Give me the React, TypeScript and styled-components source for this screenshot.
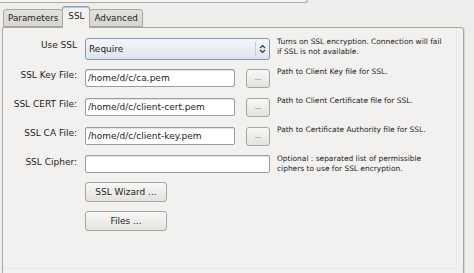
import React from "react";
import styled, { createGlobalStyle } from "styled-components";

const Global = createGlobalStyle`
  html, body { margin: 0; padding: 0; }
  body {
    background: #efeeec;
    overflow: hidden;
    font-family: "DejaVu Sans", "Liberation Sans", sans-serif;
    color: #1c1c1c;
  }
`;

const Window = styled.div`
  width: 474px;
  height: 273px;
  position: relative;
  overflow: hidden;
`;

const TopBox = styled.div`
  width: 307px;
  height: 3px;
  background: #f5f4f3;
  border-right: 1px solid #aeacaa;
  border-bottom: 1px solid #aeacaa;
  border-bottom-right-radius: 3px;
  margin-top: -1px;
`;

const Notebook = styled.div`
  margin-left: 2px;
  width: 462px;
`;

const TabBar = styled.div`
  display: flex;
  align-items: flex-end;
  height: 21px;
  margin-top: 3px;
  padding-left: 1px;
  position: relative;
  z-index: 1;
`;

const Tab = styled.div<{ $active?: boolean }>`
  box-sizing: border-box;
  height: ${(p) => (p.$active ? "22px" : "18px")};
  margin-bottom: ${(p) => (p.$active ? "-1px" : "0")};
  padding: ${(p) => (p.$active ? "3px 5px 0" : "2px 4px 0")};
  font-size: 8.8px;
  line-height: 12px;
  color: #1c1c1c;
  border: 1px solid #a9a7a4;
  border-bottom: ${(p) => (p.$active ? "none" : "1px solid #a9a7a4")};
  border-top-color: ${(p) => (p.$active ? "#8d9fb8" : "#a9a7a4")};
  border-radius: 3px 3px 0 0;
  background: ${(p) =>
    p.$active ? "#f2f1ef" : "linear-gradient(#e3e1de, #d8d6d2)"};
  margin-right: -1px;
  white-space: nowrap;
  box-shadow: ${(p) => (p.$active ? "inset 0 1px 0 #b9c8dc" : "none")};
`;

const Panel = styled.div`
  box-sizing: border-box;
  height: 260px;
  background: #f2f1ef;
  border: 1px solid #a9a7a4;
  border-top-right-radius: 3px;
  box-shadow: 1px 0 0 #d9d7d4;
`;

const Inner = styled.div`
  box-sizing: border-box;
  height: 241px;
  margin-right: 6px;
  border-right: 1px solid #e8e7e5;
  border-bottom: 1px solid #e8e7e5;
  padding-top: 10px;
`;

const Form = styled.div`
  display: grid;
  grid-template-columns: 82px 192px 1fr;
  grid-template-rows: 21px 20px 20px 20px 18px 20px 20px;
  row-gap: 9px;
`;

const Label = styled.div`
  text-align: right;
  padding-right: 8px;
  padding-top: 2px;
  font-size: 9px;
  line-height: 11px;
  white-space: nowrap;
`;

const FieldCell = styled.div`
  grid-column: 2;
  padding-right: 7px;
  display: flex;
  align-items: center;
  justify-content: space-between;
`;

const Desc = styled.div`
  font-size: 7.45px;
  line-height: 10px;
  margin-top: -1px;
  color: #232323;
  white-space: nowrap;
`;

const Select = styled.div`
  box-sizing: border-box;
  width: 185px;
  height: 22px;
  border: 1px solid #8497b3;
  border-radius: 3px;
  background: linear-gradient(#f4f6f9, #dfe4ec);
  display: flex;
  align-items: center;
  font-size: 9px;
  padding-left: 3px;
  position: relative;
`;

const SelectValue = styled.span`
  flex: 1;
`;

const SelectSep = styled.span`
  width: 1px;
  align-self: stretch;
  margin: 3px 0;
  background: #c3c9d2;
`;

const SelectArrow = styled.span`
  width: 13px;
  display: flex;
  justify-content: center;
  align-items: center;
`;

const TextInput = styled.div<{ $wide?: boolean }>`
  box-sizing: border-box;
  width: ${(p) => (p.$wide ? "185px" : "150px")};
  height: 18px;
  background: #ffffff;
  border: 1px solid #9f9d9a;
  border-radius: 2px;
  box-shadow: inset 0 1px 1px #e2e1df;
  font-size: 9px;
  line-height: 16px;
  padding-left: 2px;
  white-space: nowrap;
  overflow: hidden;
`;

const Button = styled.div<{ $w: number }>`
  box-sizing: border-box;
  width: ${(p) => p.$w}px;
  height: ${(p) => (p.$w < 40 ? 19 : 20)}px;
  border: 1px solid #a7a5a2;
  border-radius: 3px;
  background: linear-gradient(#f8f8f7, #e4e2df);
  display: flex;
  align-items: center;
  justify-content: center;
  font-size: ${(p) => (p.$w < 40 ? "7px" : "9px")};
  color: ${(p) => (p.$w < 40 ? "#555" : "#1c1c1c")};
  white-space: nowrap;
`;

const FileRow = ({ label, value, desc }: { label: string; value: string; desc: string }) => (
  <>
    <Label>{label}</Label>
    <FieldCell>
      <TextInput>{value}</TextInput>
      <Button $w={24}>...</Button>
    </FieldCell>
    <Desc>{desc}</Desc>
  </>
);

export default function App() {
  return (
    <Window>
      <Global />
      <TopBox />
      <Notebook>
        <TabBar>
          <Tab>Parameters</Tab>
          <Tab $active>SSL</Tab>
          <Tab>Advanced</Tab>
        </TabBar>
        <Panel>
          <Inner>
            <Form>
              <Label>Use SSL</Label>
              <FieldCell>
                <Select>
                  <SelectValue>Require</SelectValue>
                  <SelectSep />
                  <SelectArrow>
                    <svg width="7" height="10" viewBox="0 0 7 10">
                      <path d="M1 4 L3.5 1.5 L6 4 M1 6 L3.5 8.5 L6 6" fill="none" stroke="#3a3a3a" strokeWidth="1.2" />
                    </svg>
                  </SelectArrow>
                </Select>
              </FieldCell>
              <Desc>
                Turns on SSL encryption. Connection will fail
                <br />
                if SSL is not available.
              </Desc>

              <FileRow label="SSL Key File:" value="/home/d/c/ca.pem" desc="Path to Client Key file for SSL." />
              <FileRow label="SSL CERT File:" value="/home/d/c/client-cert.pem" desc="Path to Client Certificate file for SSL." />
              <FileRow label="SSL CA File:" value="/home/d/c/client-key.pem" desc="Path to Certificate Authority file for SSL." />

              <Label>SSL Cipher:</Label>
              <FieldCell>
                <TextInput $wide />
              </FieldCell>
              <Desc>
                Optional : separated list of permissible
                <br />
                ciphers to use for SSL encryption.
              </Desc>

              <FieldCell>
                <Button $w={82}>SSL Wizard ...</Button>
              </FieldCell>
              <FieldCell>
                <Button $w={82}>Files ...</Button>
              </FieldCell>
            </Form>
          </Inner>
        </Panel>
      </Notebook>
    </Window>
  );
}
